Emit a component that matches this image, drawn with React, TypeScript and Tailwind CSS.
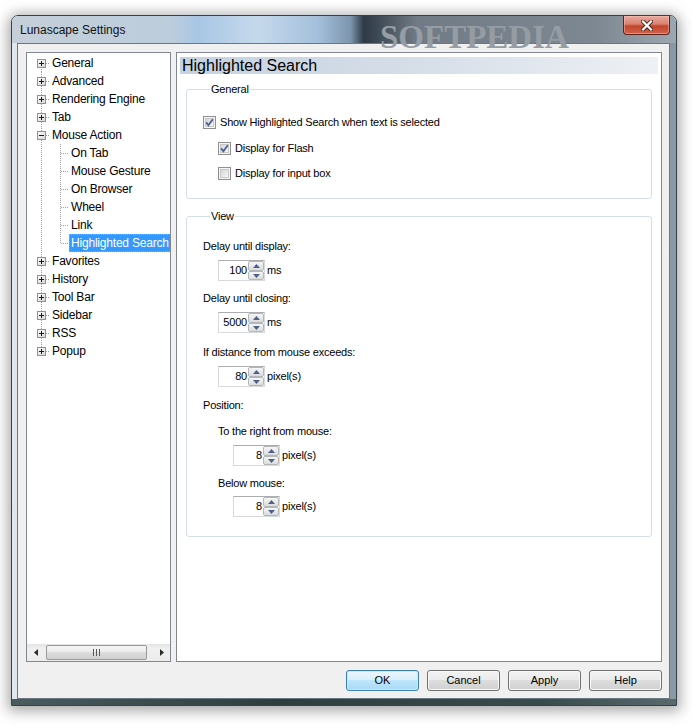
const DOT = '#a0a0a0';

const topItems = ['General', 'Advanced', 'Rendering Engine', 'Tab', 'Mouse Action', 'Favorites', 'History', 'Tool Bar', 'Sidebar', 'RSS', 'Popup'];
const kids = ['On Tab', 'Mouse Gesture', 'On Browser', 'Wheel', 'Link', 'Highlighted Search'];

function TopRow({ label, first, last, open }: { label: string; first?: boolean; last?: boolean; open?: boolean }) {
    return (
        <div className="flex h-[18px] items-center">
            <svg width="23" height="18" className="shrink-0" shapeRendering="crispEdges">
                <line x1="14.5" y1={first ? 9 : 0} x2="14.5" y2={last ? 9 : 18} stroke={DOT} strokeDasharray="1 1" />
                <line x1="19" y1="9.5" x2="23" y2="9.5" stroke={DOT} strokeDasharray="1 1" />
                <rect x="10.5" y="5.5" width="8" height="8" fill="url(#expg)" stroke="#919191" />
                <line x1="12" y1="9.5" x2="17" y2="9.5" stroke="#1a1a1a" />
                {!open && <line x1="14.5" y1="7" x2="14.5" y2="12" stroke="#1a1a1a" />}
            </svg>
            <span className="whitespace-nowrap pl-[2px] leading-[16px]">{label}</span>
        </div>
    );
}

function KidRow({ label, last, selected }: { label: string; last?: boolean; selected?: boolean }) {
    return (
        <div className="flex h-[18px] items-center">
            <svg width="23" height="18" className="shrink-0" shapeRendering="crispEdges">
                <line x1="14.5" y1="0" x2="14.5" y2="18" stroke={DOT} strokeDasharray="1 1" />
            </svg>
            <svg width="19" height="18" className="shrink-0" shapeRendering="crispEdges">
                <line x1="10.5" y1="0" x2="10.5" y2={last ? 10 : 18} stroke={DOT} strokeDasharray="1 1" />
                <line x1="11" y1="9.5" x2="19" y2="9.5" stroke={DOT} strokeDasharray="1 1" />
            </svg>
            {selected ? (
                <span className="flex h-[18px] items-center whitespace-nowrap border border-dotted border-[#d9a441] bg-[#3399ff] pl-[1px] pr-[2px] leading-[16px] text-white">{label}</span>
            ) : (
                <span className="whitespace-nowrap pl-[2px] leading-[16px]">{label}</span>
            )}
        </div>
    );
}

function Check({ on }: { on: boolean }) {
    return (
        <svg width="13" height="13" className="shrink-0" shapeRendering="crispEdges">
            <rect x="0.5" y="0.5" width="12" height="12" fill="#f6f6f6" stroke="#8e8f8f" />
            <rect x="2.5" y="2.5" width="8" height="8" fill="url(#cbg)" stroke="#c8c8c8" />
            {on && <path d="M3.2 6.4 L5.4 9.2 L9.8 3.2" fill="none" stroke="#4a5f9c" strokeWidth="1.8" shapeRendering="geometricPrecision" />}
        </svg>
    );
}

function Spin({ value, unit }: { value: string; unit: string }) {
    return (
        <div className="flex h-[21px] items-center">
            <div className="flex h-[21px] w-[47px] border border-[#d6d9de] border-t-[#abadb3] bg-white">
                <div className="flex flex-1 items-center justify-end pr-[1px]">{value}</div>
                <div className="flex w-[16px] flex-col">
                    <div className="flex h-[10px] items-center justify-center rounded-[2px] border border-[#b3b6ba] bg-gradient-to-b from-[#f6f6f6] to-[#dcdcdc]">
                        <svg width="7" height="4"><path d="M0 4 L3.5 0 L7 4 Z" fill="#4d6289" /></svg>
                    </div>
                    <div className="flex h-[9px] items-center justify-center rounded-[2px] border border-[#b3b6ba] bg-gradient-to-b from-[#f6f6f6] to-[#dcdcdc]">
                        <svg width="7" height="4"><path d="M0 0 L7 0 L3.5 4 Z" fill="#4d6289" /></svg>
                    </div>
                </div>
            </div>
            <span className="ml-[2px]">{unit}</span>
        </div>
    );
}

function Btn({ label, primary }: { label: string; primary?: boolean }) {
    return (
        <div
            className={`flex h-[21px] w-[73px] items-center justify-center rounded-[3px] border text-[11px] ${
                primary
                    ? 'border-[#3c7fb1] bg-[linear-gradient(180deg,#eaf6fd_0%,#d9f0fc_45%,#bee6fd_50%,#a7d9f5_100%)] shadow-[inset_0_0_0_1px_#c8eafd]'
                    : 'border-[#707070] bg-[linear-gradient(180deg,#f2f2f2_0%,#ebebeb_45%,#dddddd_50%,#cfcfcf_100%)] shadow-[inset_0_0_0_1px_#fafafa]'
            }`}
        >
            {label}
        </div>
    );
}

export default function App() {
    return (
        <div className="min-h-screen bg-white pl-[11px] pt-[15px] font-['Liberation_Sans',Arial,sans-serif] text-black">
            <svg width="0" height="0" className="absolute">
                <defs>
                    <linearGradient id="expg" x1="0" y1="0" x2="1" y2="1">
                        <stop offset="0" stopColor="#ffffff" />
                        <stop offset="1" stopColor="#d4d4d4" />
                    </linearGradient>
                    <linearGradient id="cbg" x1="0" y1="0" x2="1" y2="1">
                        <stop offset="0" stopColor="#d2d2d2" />
                        <stop offset="1" stopColor="#fbfbfb" />
                    </linearGradient>
                </defs>
            </svg>

            <div className="flex h-[691px] w-[666px] flex-col overflow-hidden rounded-t-[7px] border border-[#34424c] shadow-[0_2px_14px_3px_rgba(0,0,0,0.35)]">
                {/* title bar */}
                <div className="relative flex h-[27px] shrink-0 items-start justify-between bg-[linear-gradient(90deg,#c4cfd9_0%,#bccddd_24%,#a8c6e4_28%,#c6d9ec_37%,#a4c0dc_46%,#7d95ad_51%,#2d3945_53%,#46515c_56%,#707b85_61%,#7e8892_88%,#9ca7b0_100%)]">
                    <span className="pointer-events-none absolute left-[368px] top-[-3px] font-['Liberation_Serif',serif] text-[33px] font-bold text-[#959ca3]">SOFTPEDIA</span>
                    <span className="relative ml-[8px] mt-[7px] text-[12px] leading-[14px] text-[#111]">Lunascape Settings</span>
                    <div className="relative mr-[6px] flex h-[19px] w-[47px] items-center justify-center rounded-b-[4px] border border-t-0 border-[#5e2219] bg-[linear-gradient(180deg,#e9aa9c_0%,#d9826f_45%,#c2452b_55%,#d0634c_100%)] shadow-[inset_0_0_0_1px_rgba(255,200,190,0.45)]">
                        <svg width="12" height="11" viewBox="0 0 12 11">
                            <path d="M2 1.5 L10 9.5 M10 1.5 L2 9.5" stroke="#4a1d16" strokeWidth="4" strokeLinecap="square" />
                            <path d="M2 1.5 L10 9.5 M10 1.5 L2 9.5" stroke="#ffffff" strokeWidth="2.2" strokeLinecap="square" />
                        </svg>
                    </div>
                </div>

                {/* body with side frames */}
                <div className="flex flex-1 bg-[linear-gradient(90deg,#dfe6ec_0%,#c9d3dc_40%,#a6b2bc_70%,#8b98a3_100%)]">
                    <div className="w-[5px] shrink-0" />
                    <div className="flex h-[656px] w-[653px] flex-col border border-[#6a7884] bg-[#f0f0f0] pb-[7px] pl-[8px] pr-[7px] pt-[8px]">
                        <div className="flex h-[610px] gap-[5px]">
                            {/* tree */}
                            <div className="flex w-[145px] flex-col border border-[#828790] bg-white text-[12px] tracking-[-0.2px]">
                                <div className="flex-1 overflow-hidden pt-[1px]">
                                    {topItems.map((t, i) => (
                                        <div key={t}>
                                            <TopRow label={t} first={i === 0} last={i === topItems.length - 1} open={t === 'Mouse Action'} />
                                            {t === 'Mouse Action' &&
                                                kids.map((k, j) => (
                                                    <KidRow key={k} label={k} last={j === kids.length - 1} selected={k === 'Highlighted Search'} />
                                                ))}
                                        </div>
                                    ))}
                                </div>
                                <div className="flex h-[17px] items-center bg-[linear-gradient(180deg,#e3e3e3,#f0f0f0_30%,#ececec)]">
                                    <div className="flex w-[17px] justify-center">
                                        <svg width="4" height="7"><path d="M4 0 L0 3.5 L4 7 Z" fill="#2c2c2c" /></svg>
                                    </div>
                                    <div className="ml-[2px] flex h-[15px] w-[101px] items-center justify-center rounded-[2px] border border-[#989898] bg-[linear-gradient(180deg,#f4f4f4_0%,#ececec_45%,#dcdcdc_50%,#d2d2d2_100%)]">
                                        <svg width="7" height="7" shapeRendering="crispEdges">
                                            <path d="M0.5 0 V7 M3.5 0 V7 M6.5 0 V7" stroke="#5a5a5a" />
                                        </svg>
                                    </div>
                                    <div className="flex-1" />
                                    <div className="flex w-[17px] justify-center">
                                        <svg width="4" height="7"><path d="M0 0 L4 3.5 L0 7 Z" fill="#2c2c2c" /></svg>
                                    </div>
                                </div>
                            </div>

                            {/* settings panel */}
                            <div className="flex w-[486px] flex-col border border-[#828790] bg-white px-[3px] pb-[3px] pt-[4px] text-[11px] tracking-[-0.2px]">
                                <div className="flex h-[17px] items-center bg-[linear-gradient(90deg,#c5d2e1_0%,#d6dee8_50%,#eef1f5_100%)] pl-[2px] text-[16px] leading-[17px] tracking-normal">
                                    Highlighted Search
                                </div>

                                <fieldset className="mx-[6px] mt-[9px] rounded-[3px] border border-[#d5dfe5] pb-[18px] pl-[16px]">
                                    <legend className="ml-[7px] px-[1px] leading-[13px]">General</legend>
                                    <div className="mt-[20px] flex h-[13px] items-center gap-[4px] leading-[13px]">
                                        <Check on />
                                        <span>Show Highlighted Search when text is selected</span>
                                    </div>
                                    <div className="ml-[15px] mt-[13px] flex h-[13px] items-center gap-[4px] leading-[13px]">
                                        <Check on />
                                        <span>Display for Flash</span>
                                    </div>
                                    <div className="ml-[15px] mt-[12px] flex h-[13px] items-center gap-[4px] leading-[13px]">
                                        <Check on={false} />
                                        <span>Display for input box</span>
                                    </div>
                                </fieldset>

                                <fieldset className="mx-[6px] mt-[11px] rounded-[3px] border border-[#d5dfe5] pb-[19px] pl-[16px]">
                                    <legend className="ml-[7px] px-[1px] leading-[13px]">View</legend>
                                    <div className="mt-[17px] h-[13px] leading-[13px]">Delay until display:</div>
                                    <div className="ml-[15px] mt-[7px]"><Spin value="100" unit="ms" /></div>
                                    <div className="mt-[11px] h-[13px] leading-[13px]">Delay until closing:</div>
                                    <div className="ml-[15px] mt-[7px]"><Spin value="5000" unit="ms" /></div>
                                    <div className="mt-[13px] h-[13px] leading-[13px]">If distance from mouse exceeds:</div>
                                    <div className="ml-[15px] mt-[7px]"><Spin value="80" unit="pixel(s)" /></div>
                                    <div className="mt-[12px] h-[13px] leading-[13px]">Position:</div>
                                    <div className="ml-[15px] mt-[13px] h-[13px] leading-[13px]">To the right from mouse:</div>
                                    <div className="ml-[30px] mt-[7px]"><Spin value="8" unit="pixel(s)" /></div>
                                    <div className="ml-[15px] mt-[11px] h-[13px] leading-[13px]">Below mouse:</div>
                                    <div className="ml-[30px] mt-[6px]"><Spin value="8" unit="pixel(s)" /></div>
                                </fieldset>
                            </div>
                        </div>

                        <div className="mt-[8px] flex h-[21px] justify-end gap-[8px]">
                            <Btn label="OK" primary />
                            <Btn label="Cancel" />
                            <Btn label="Apply" />
                            <Btn label="Help" />
                        </div>
                    </div>
                    <div className="w-[6px] shrink-0" />
                </div>
                <div className="h-[6px] shrink-0 bg-[linear-gradient(90deg,#4a5c5e_0%,#2f3d3e_40%,#3a4b4c_80%,#5a6a6c_100%)]" />
            </div>
        </div>
    );
}
